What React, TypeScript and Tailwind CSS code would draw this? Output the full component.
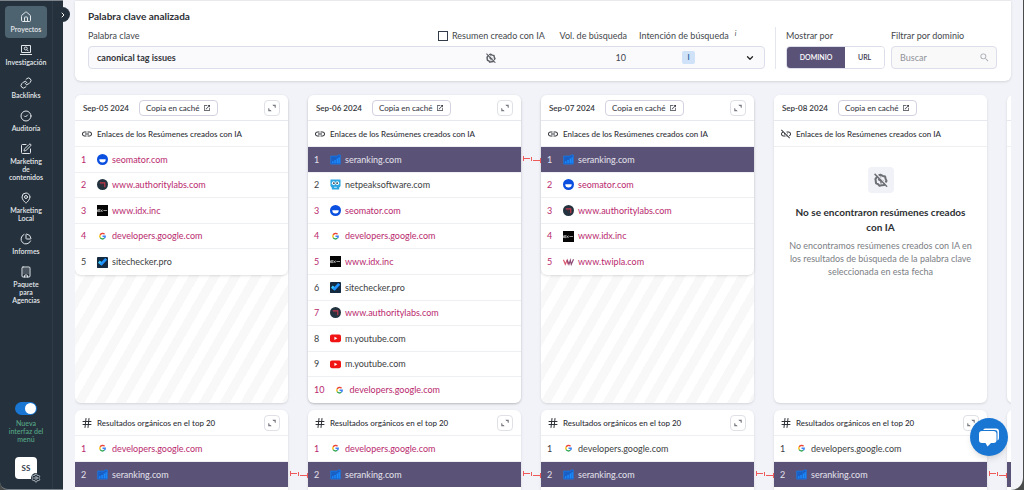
import { useState } from 'react';
import type { ReactNode } from 'react';
import { House, Link, CircleCheck, SquarePen, MapPin, ChartPie, Building, ChevronRight, ChevronDown, Hash, Settings } from 'lucide-react';
import { MdLink, MdLinkOff, MdOpenInNew, MdSearch } from 'react-icons/md';

type Row = { domain: string; hit?: boolean; active?: boolean; linked?: boolean };
type Day = { date: string; rows: Row[]; organic: Row[] };

const SERANKING: Row = { domain: 'seranking.com', active: true };

const DAYS: Day[] = [
  {
    date: 'Sep-05 2024',
    rows: [
      { domain: 'seomator.com', hit: true },
      { domain: 'www.authoritylabs.com', hit: true },
      { domain: 'www.idx.inc', hit: true },
      { domain: 'developers.google.com', hit: true },
      { domain: 'sitechecker.pro' },
    ],
    organic: [{ domain: 'developers.google.com', hit: true }, { ...SERANKING, linked: true }],
  },
  {
    date: 'Sep-06 2024',
    rows: [
      { ...SERANKING, linked: true },
      { domain: 'netpeaksoftware.com' },
      { domain: 'seomator.com', hit: true },
      { domain: 'developers.google.com', hit: true },
      { domain: 'www.idx.inc', hit: true },
      { domain: 'sitechecker.pro' },
      { domain: 'www.authoritylabs.com', hit: true },
      { domain: 'm.youtube.com' },
      { domain: 'm.youtube.com' },
      { domain: 'developers.google.com', hit: true },
    ],
    organic: [{ domain: 'developers.google.com', hit: true }, { ...SERANKING, linked: true }],
  },
  {
    date: 'Sep-07 2024',
    rows: [
      SERANKING,
      { domain: 'seomator.com', hit: true },
      { domain: 'www.authoritylabs.com', hit: true },
      { domain: 'www.idx.inc', hit: true },
      { domain: 'www.twipla.com', hit: true },
    ],
    organic: [{ domain: 'developers.google.com' }, { ...SERANKING, linked: true }],
  },
  {
    date: 'Sep-08 2024',
    rows: [],
    organic: [{ domain: 'developers.google.com' }, { ...SERANKING, linked: true }],
  },
];

const ResearchIcon = ({ className }: { className?: string }) => (
  <svg viewBox="0 0 24 24" className={className} fill="none" stroke="currentColor" strokeWidth="2">
    <path d="M3 3h18v14H3zM0 21h24" />
    <circle cx="11.5" cy="9" r="3" />
    <path d="m14 11.5 3 3" />
  </svg>
);

const NAV = [
  { label: 'Proyectos', icon: House },
  { label: 'Investigación', icon: ResearchIcon },
  { label: 'Backlinks', icon: Link },
  { label: 'Auditoría', icon: CircleCheck },
  { label: 'Marketing\nde\ncontenidos', icon: SquarePen },
  { label: 'Marketing\nLocal', icon: MapPin },
  { label: 'Informes', icon: ChartPie },
  { label: 'Paquete\npara\nAgencias', icon: Building },
];

function AiOff({ className }: { className?: string }) {
  return (
    <svg viewBox="0 0 24 24" className={className} fill="none" stroke="currentColor">
      <path d="M7.5 4.5 11 3l4 2 4 1 1 4.5 1.5 3-2.5 3.5-1.5 3.5-4.5.5-3.5 1-2.5-3-3.5-1.5L3 14l-.5-4L5 7z" strokeWidth="3.5" strokeLinejoin="round" />
      <path d="M11 6v5l6 3M7 11l5 3v4" strokeWidth="2.5" />
      <path d="m2.5 0 21 21.500" stroke="#f4f5f9" strokeWidth="2" />
      <path d="m1 1.5 21.5 22" strokeWidth="2.5" />
    </svg>
  );
}

function Expand() {
  return (
    <button aria-label="Ampliar" className="flex size-4 items-center justify-center rounded-sm border border-[#dfe1e6] bg-white text-[#777a80]">
      <svg viewBox="0 0 12 12" className="size-[10px]" fill="currentColor">
        <path d="M6.5 2h4v4L9 5V3.5H7.500zM5.500 10h-4V6L3 7v1.500h1.500z" />
      </svg>
    </button>
  );
}

function Favicon({ domain }: { domain: string }) {
  const marks: Record<string, ReactNode> = {
    'seomator.com': (
      <>
        <circle cx="12" cy="12" r="12" fill="#0b4fe0" />
        <path d="M5 11.5h14a7 7 0 0 1-14 0z" fill="#fff" />
      </>
    ),
    'www.authoritylabs.com': (
      <>
        <circle cx="12" cy="12" r="12" fill="#22333f" />
        <path d="M6 8.5h11V18" fill="none" stroke="#c8394c" strokeWidth="2.5" />
        <path d="M8 12h5v6" fill="none" stroke="#432b38" strokeWidth="2" />
      </>
    ),
    'www.idx.inc': (
      <>
        <rect width="24" height="24" fill="#050505" />
        <path d="M1 10v5M3 10h3v4.5H3zM8 10l4 5M12 10l-4 5M14 12h8" fill="none" stroke="#ddd" strokeWidth="1.5" />
      </>
    ),
    'developers.google.com': (
      <g fill="none" strokeWidth="3">
        <path d="M16.5 7A6 6 0 0 0 7 8.5" stroke="#ea4335" />
        <path d="M7 8.5a6 6 0 0 0 0 6" stroke="#fbbc05" />
        <path d="M7 14.5A6 6 0 0 0 16 16" stroke="#34a853" />
        <path d="M16 16a6 6 0 0 0 2-4.5h-6" stroke="#4285f4" />
      </g>
    ),
    'sitechecker.pro': (
      <>
        <rect width="24" height="24" rx="1" fill="#132a40" />
        <path d="m4 10 6 5" stroke="#35c8ff" strokeWidth="6" />
        <path d="m8 17 12-13" stroke="#1f93ff" strokeWidth="6" />
      </>
    ),
    'seranking.com': (
      <>
        <path d="M1.5 22V4.5H15L18 2h4.500v20z" fill="#1a5fc4" stroke="#167ff2" strokeWidth="1.5" />
        <path d="M6 20v-4M11 20v-7M16 20V10M20 20V7" stroke="#1b8cff" strokeWidth="3" />
      </>
    ),
    'netpeaksoftware.com': (
      <>
        <path d="M1 1h22v14l-3 4v4H4v-4l-3-4z" fill="#2ca5e0" />
        <circle cx="8" cy="9" r="4" fill="#fff" />
        <circle cx="16" cy="9" r="4" fill="#fff" />
        <circle cx="8.5" cy="9" r="1.8" fill="#123" />
        <circle cx="15.5" cy="9" r="1.8" fill="#123" />
        <path d="M9 18h6" stroke="#d8f0fb" strokeWidth="2" />
      </>
    ),
    'm.youtube.com': (
      <>
        <rect x="0" y="3" width="24" height="17" rx="4" fill="#f01414" />
        <path d="m9.5 8 6.5 3.5-6.5 3.5z" fill="#fff" />
      </>
    ),
    'www.twipla.com': (
      <g fill="none" strokeWidth="2.5">
        <path d="m1 6 4 10 4-9 2 9" stroke="#d9566f" />
        <path d="m9 6 4 10 3-9 2 9 5-11" stroke="#8d4a76" />
      </g>
    ),
  };
  return (
    <svg viewBox="0 0 24 24" className="size-[11px] shrink-0">
      {marks[domain]}
    </svg>
  );
}

function Connector() {
  return (
    <svg viewBox="0 0 20 8" className="absolute top-2 left-full h-2 w-5" fill="none" stroke="#ee5a5a">
      <path d="M2.5 1v5M3 3.5h6M10.5 2v4M12 5.5h7M19.5 3v5" />
    </svg>
  );
}

function RankRow({ row, rank }: { row: Row; rank: number }) {
  const tone = row.active ? 'bg-[#5b5277] text-[#e4e2ec]' : row.hit ? 'text-[#b9296e]' : 'text-[#3c3e43]';
  return (
    <li className={`relative flex items-center gap-2.5 border-b border-[#eeeff3] px-1.5 text-[9px] last:border-b-0 ${tone}`}>
      <span className="min-w-1.5">{rank}</span>
      <a href={`#${row.domain}`} className="flex items-center gap-1">
        <Favicon domain={row.domain} />
        {row.domain}
      </a>
      {row.linked && <Connector />}
    </li>
  );
}

function AiLinks({ day }: { day: Day }) {
  const empty = day.rows.length === 0;
  const full = day.rows.length > 5;
  return (
    <section className={`h-[308px] rounded-md shadow-sm ${empty || full ? 'bg-white' : 'bg-[repeating-linear-gradient(120deg,#ffffff_0px,#ffffff_9px,#f8f8f9_9px,#f8f8f9_18px)]'}`}>
      <div className={`rounded-md bg-white ${empty ? '' : 'shadow-sm'}`}>
        <div className="flex h-[26px] items-center border-b border-[#e6e8ee] px-2">
          <span className="w-14 text-[8px] font-semibold text-[#33353a]">{day.date}</span>
          <button className="flex h-4 items-center gap-1 rounded-sm border border-[#d3d3e0] px-1.5 text-[8px] font-medium text-[#3c3e48]">
            Copia en caché
            <MdOpenInNew className="size-2" />
          </button>
          {!empty && <div className="ml-auto"><Expand /></div>}
        </div>
        <h3 className="flex h-[26px] items-center gap-1 border-b border-[#eeeff3] px-1.5 text-[8px] font-medium text-[#2f3138]">
          {empty ? <MdLinkOff className="size-3" /> : <MdLink className="size-3" />}
          Enlaces de los Resúmenes creados con IA
        </h3>
        {!empty && (
          <ol className={`grid ${full ? 'h-64 grid-rows-10' : 'h-32 grid-rows-5'}`}>
            {day.rows.map((row, i) => <RankRow key={i} row={row} rank={i + 1} />)}
          </ol>
        )}
      </div>
      {empty && (
        <div className="flex flex-col items-center px-3 pt-5 text-center">
          <div className="flex size-[26px] items-center justify-center rounded-sm bg-[#f1f2f7] text-[#6d7076]">
            <AiOff className="size-[14px]" />
          </div>
          <h4 className="mt-3 px-1 text-[10px] leading-[15px] font-bold text-[#2d2f33]">No se encontraron resúmenes creados con IA</h4>
          <p className="mt-1 text-[9px] leading-[13px] text-[#7b7e84]">
            No encontramos resúmenes creados con IA en los resultados de búsqueda de la palabra clave seleccionada en esta fecha
          </p>
        </div>
      )}
    </section>
  );
}

function Organic({ rows }: { rows: Row[] }) {
  return (
    <section className="rounded-md bg-white shadow-sm">
      <div className="flex h-[26px] items-center gap-1 border-b border-[#eeeff3] pr-2 pl-1.5 text-[8px] font-medium text-[#2f3138]">
        <Hash className="size-3" />
        <h3>Resultados orgánicos en el top 20</h3>
        <div className="ml-auto"><Expand /></div>
      </div>
      <ol className="grid h-32 grid-rows-5">
        {rows.map((row, i) => <RankRow key={i} row={row} rank={i + 1} />)}
      </ol>
    </section>
  );
}

function Sidebar() {
  return (
    <aside className="relative flex w-[63px] shrink-0 rounded-bl-lg border-t border-b border-[#7d848b] bg-[#25313d]">
      <div className="flex w-[53px] flex-col items-center border-r border-[#2f3b47] pt-[5px]">
        <nav className="flex flex-col gap-px">
          {NAV.map(({ label, icon: Icon }, i) => (
            <a
              key={label}
              href="#"
              className={`flex w-[42px] flex-col items-center gap-0.5 rounded-sm py-[5px] text-center text-[7px] leading-2 font-semibold whitespace-pre-line text-[#e3e7ea] ${i === 0 ? 'bg-[#4e6370]' : ''}`}
            >
              <Icon className="size-3" />
              {label}
            </a>
          ))}
        </nav>
        <label className="mt-auto flex flex-col items-center gap-1 text-center text-[7px] leading-2 font-medium text-[#56a886]">
          <input type="checkbox" defaultChecked className="peer sr-only" />
          <span className="flex h-[13px] w-[22px] items-center justify-end rounded-full bg-[#1976d2] px-px">
            <span className="size-[11px] rounded-full bg-white" />
          </span>
          <span className="w-9">Nueva interfaz del menú</span>
        </label>
        <button className="relative mt-3.5 mb-2.5 flex size-[22px] items-center justify-center rounded-sm bg-white text-[8px] font-bold text-[#33404c]">
          SS
          <Settings className="absolute -right-1 -bottom-1 size-[10px] rounded-full bg-[#25313d] text-[#c8d0d6]" />
        </button>
      </div>
      <button aria-label="Expandir menú" className="absolute top-1.5 -right-[7px] z-10 flex size-[15px] items-center justify-center rounded-full bg-[#25313d] text-white">
        <ChevronRight className="size-2" strokeWidth={3} />
      </button>
    </aside>
  );
}

function KeywordCard() {
  const [mode, setMode] = useState('DOMINIO');
  return (
    <header className="rounded-b-md border-t border-[#e9e9ed] bg-white pt-2 pr-3.5 pb-3 pl-[13px] text-[9px] text-[#44474c] shadow-sm">
      <h2 className="text-[10px] leading-[14px] font-bold text-[#2d2f33]">Palabra clave analizada</h2>
      <div className="mt-1 flex">
        <div className="flex flex-1 flex-col gap-0.5">
          <div className="grid h-[17px] grid-cols-[1fr_108px_81px_113px_25px] items-center">
            <span>Palabra clave</span>
            <label className="flex items-center gap-1 whitespace-nowrap">
              <input type="checkbox" className="size-[10px] appearance-none border border-[#333b48] bg-white" />
              Resumen creado con IA
            </label>
            <span className="text-right whitespace-nowrap">Vol. de búsqueda</span>
            <span className="flex gap-1.5 pl-3 whitespace-nowrap">
              Intención de búsqueda
              <i className="text-[7px] leading-2">i</i>
            </span>
          </div>
          <button className="grid h-[23px] w-full grid-cols-[1fr_108px_81px_113px_25px] items-center rounded-sm border border-[#dcdeea] bg-[#fafafd] text-left">
            <span className="pl-2 font-bold text-[#33353a]">canonical tag issues</span>
            <AiOff className="size-[10px] justify-self-center text-[#5d6066]" />
            <span className="text-right">10</span>
            <span className="ml-3 flex size-[13px] items-center justify-center justify-self-center rounded-xs bg-[#cfe2f8] text-[7px] font-bold text-[#27629e]">I</span>
            <ChevronDown className="ml-1.5 size-[10px] text-[#222]" strokeWidth={3} />
          </button>
        </div>
        <div className="mx-2.5 w-px bg-[#e4e6ee]" />
        <div className="flex w-[99px] flex-col gap-0.5">
          <div className="flex h-[17px] items-center">Mostrar por</div>
          <div className="flex h-[23px] overflow-hidden rounded-sm border border-[#dcdeea] text-[7px] font-semibold">
            {['DOMINIO', 'URL'].map((m) => (
              <button key={m} onClick={() => setMode(m)} className={`grow px-2 ${mode === m ? 'bg-[#5b5277] text-white' : 'bg-white text-[#3b3850]'}`}>
                {m}
              </button>
            ))}
          </div>
        </div>
        <div className="ml-1.5 flex w-[106px] flex-col gap-0.5">
          <label htmlFor="filter" className="flex h-[17px] items-center">Filtrar por dominio</label>
          <div className="flex h-[23px] items-center rounded-sm border border-[#dcdeea] bg-[#f9f9fa] pr-1.5 pl-2">
            <input id="filter" placeholder="Buscar" className="min-w-0 flex-1 bg-transparent outline-none placeholder:text-[#909298]" />
            <MdSearch className="size-[11px] text-[#a9abb4]" />
          </div>
        </div>
      </div>
    </header>
  );
}

export default function App() {
  return (
    <div className="flex h-screen overflow-hidden bg-[#4a4c4b] font-['Lato',sans-serif]">
      <Sidebar />
      <main className="mr-px min-w-0 flex-1 overflow-hidden rounded-br-xl bg-[#f1f3f8] pr-3 pl-3">
        <KeywordCard />
        <div className="flex gap-5 overflow-hidden pt-3.5">
          {DAYS.map((day) => (
            <div key={day.date} className="flex w-[213px] shrink-0 flex-col gap-[7px]">
              <AiLinks day={day} />
              <Organic rows={day.organic} />
            </div>
          ))}
          {/* next day, scrolled off to the right */}
          <div className="flex w-[213px] shrink-0 flex-col gap-[7px]">
            <div className="h-[308px] rounded-md bg-white shadow-sm">
              <div className="h-[26px] border-b border-[#e6e8ee]" />
              <div className="h-[26px] border-b border-[#eeeff3]" />
            </div>
            <div className="h-[154px] rounded-md bg-white pt-[52px] shadow-sm">
              <div className="h-[25px] bg-[#5b5277]" />
            </div>
          </div>
        </div>
      </main>
      <button aria-label="Abrir chat" className="fixed right-4 bottom-[34px] flex size-[38px] items-center justify-center rounded-full bg-[#1976d2] shadow-md">
        <svg viewBox="0 0 24 24" className="size-6" fill="#fff">
          <path d="M8 3.5h11a3 3 0 0 1 3 3V13a3 3 0 0 1-1.5 2.6V7.500a2.5 2.5 0 0 0-2.5-2.5H6.200A2.5 2.5 0 0 1 8 3.500z" />
          <path d="M5 6h11.500a3 3 0 0 1 3 3v6a3 3 0 0 1-3 3h-2.500L10.500 21.500 8.500 18H5a3 3 0 0 1-3-3V9a3 3 0 0 1 3-3z" />
        </svg>
      </button>
    </div>
  );
}
